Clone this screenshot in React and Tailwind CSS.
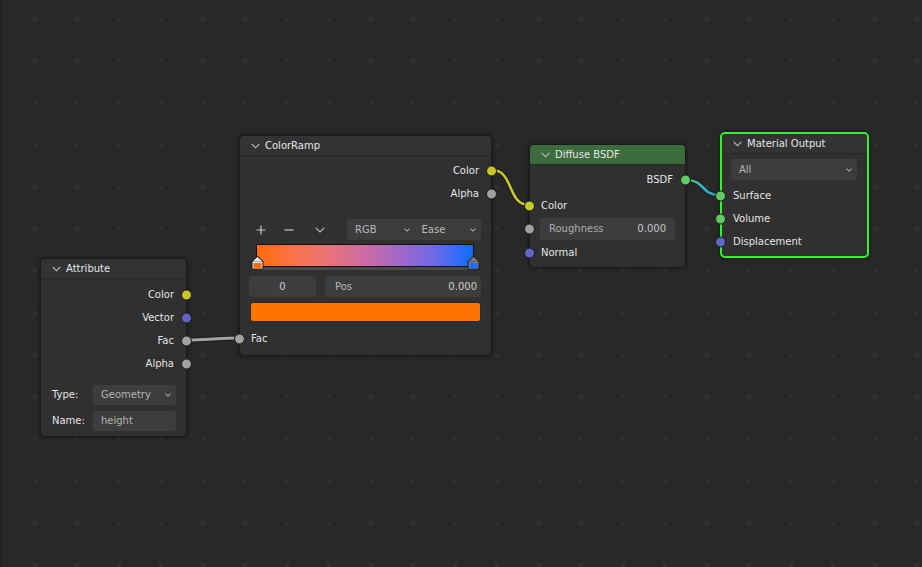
import React from "react";

const SOCK = {
  yellow: "bg-[#c7c729]",
  purple: "bg-[#6363c7]",
  gray: "bg-[#a1a1a1]",
  green: "bg-[#63c763]",
};

function Chevron({ className = "" }) {
  return (
    <svg width="9" height="6" viewBox="0 0 9 6" className={className}>
      <polyline points="0.7,0.8 4.5,4.8 8.3,0.8" fill="none" stroke="#c4c4c4" strokeWidth="1.1" />
    </svg>
  );
}

function SmallChevron() {
  return (
    <svg width="6" height="4" viewBox="0 0 6 4">
      <polyline points="0.6,0.6 3,3.2 5.4,0.6" fill="none" stroke="#c8c8c8" strokeWidth="1" />
    </svg>
  );
}

function Socket({ color, side, offset = "6" }) {
  const pos =
    side === "out"
      ? offset === "7"
        ? "right-[-7px]"
        : "right-[-6px]"
      : offset === "7"
      ? "left-[-7px]"
      : "left-[-6px]";
  return (
    <span
      className={`absolute top-1/2 -translate-y-1/2 ${pos} w-[11px] h-[11px] rounded-full border border-[#1b1b1b] ${SOCK[color]}`}
    />
  );
}

function OutRow({ label, color }) {
  return (
    <div className="relative h-[23px] flex items-center justify-end pr-[12px] text-[#e4e4e4]">
      {label}
      <Socket color={color} side="out" />
    </div>
  );
}

function InRow({ label, color, offset, cls = "" }) {
  return (
    <div className={`relative h-[23px] flex items-center pl-[11px] text-[#e4e4e4] ${cls}`}>
      {label}
      <Socket color={color} side="in" offset={offset} />
    </div>
  );
}

function Header({ title, green }) {
  return (
    <div
      className={`h-[20px] flex items-center pl-[11px] gap-[5px] border-b border-[#262626] rounded-t-[4px] ${
        green ? "bg-[#3c6b3c]" : "bg-[#333333]"
      } text-[#e6e6e6]`}
    >
      <Chevron />
      <span>{title}</span>
    </div>
  );
}

function Marker({ inner, selected }) {
  return (
    <svg width="13" height="15" viewBox="0 0 13 15">
      <path d="M6.5 0.5 L12.5 6.5 L12.5 14.5 L0.5 14.5 L0.5 6.5 Z" fill="#1a1a1a" />
      <path d="M6.5 1.8 L11.3 6.6 L1.7 6.6 Z" fill={selected ? "#e6e6e6" : "#7c7c7c"} />
      <rect x="1.5" y="6.6" width="10" height="7" fill={selected ? "#e6e6e6" : "#7c7c7c"} />
      <rect x="2.5" y="8" width="8" height="5.5" fill={inner} />
    </svg>
  );
}

export default function App() {
  return (
    <div className="relative w-[922px] h-[567px] overflow-hidden bg-[#282828] font-['DejaVu_Sans',sans-serif] text-[10px] leading-none">
      {/* dot grid */}
      <svg className="absolute inset-0" width="922" height="567">
        <defs>
          <pattern id="dots" width="42" height="42" patternUnits="userSpaceOnUse">
            <rect x="33" y="17" width="4" height="4" fill="#313131" />
          </pattern>
        </defs>
        <rect width="922" height="567" fill="url(#dots)" />
      </svg>
      <div className="absolute left-0 top-0 w-[3px] h-full bg-gradient-to-r from-[#1d1d1d] to-[#282828]" />

      {/* wires */}
      <svg className="absolute inset-0" width="922" height="567">
        <defs>
          <linearGradient id="teal" x1="686" y1="0" x2="720" y2="0" gradientUnits="userSpaceOnUse">
            <stop offset="0" stopColor="#4fb86e" />
            <stop offset="0.55" stopColor="#2db6d4" />
            <stop offset="1" stopColor="#2a9ca6" />
          </linearGradient>
        </defs>
        <path d="M187 340 C205 340 221 338 239 338" stroke="#1a1a1a" strokeWidth="5" fill="none" />
        <path d="M187 340 C205 340 221 338 239 338" stroke="#a3a3a3" strokeWidth="3" fill="none" />
        <path d="M492 170 C514 170 507 205 529 205" stroke="#1d1d1d" strokeWidth="4.5" fill="none" />
        <path d="M492 170 C514 170 507 205 529 205" stroke="#c9c92c" strokeWidth="2.6" fill="none" />
        <path d="M686 180 C706 180 700 195 720 195" stroke="#1d1d1d" strokeWidth="4.5" fill="none" />
        <path d="M686 180 C706 180 700 195 720 195" stroke="url(#teal)" strokeWidth="2.6" fill="none" />
      </svg>

      {/* Attribute node */}
      <div className="absolute left-[40px] top-[258px] w-[147px] bg-[#303030] border border-[#1b1b1b] rounded-[5px] shadow-[0_0_4px_rgba(0,0,0,0.5)]">
        <Header title="Attribute" />
        <div className="pt-[4px] pb-[5px]">
          <OutRow label="Color" color="yellow" />
          <OutRow label="Vector" color="purple" />
          <OutRow label="Fac" color="gray" />
          <OutRow label="Alpha" color="gray" />
          <div className="mt-[10px] flex items-center h-[20px] pl-[11px] pr-[10px]">
            <span className="w-[41px] text-[#e4e4e4]">Type:</span>
            <div className="flex-1 h-full rounded-[3px] bg-[#3d3d3d] flex items-center justify-between pl-[8px] pr-[5px] text-[#b4b4b4]">
              <span>Geometry</span>
              <SmallChevron />
            </div>
          </div>
          <div className="mt-[6px] flex items-center h-[20px] pl-[11px] pr-[10px]">
            <span className="w-[41px] text-[#e4e4e4]">Name:</span>
            <div className="flex-1 h-full rounded-[3px] bg-[#3d3d3d] flex items-center pl-[8px] text-[#b4b4b4]">
              height
            </div>
          </div>
        </div>
      </div>

      {/* ColorRamp node */}
      <div className="absolute left-[239px] top-[135px] w-[253px] bg-[#303030] border border-[#1b1b1b] rounded-[5px] shadow-[0_0_4px_rgba(0,0,0,0.5)]">
        <Header title="ColorRamp" />
        <div className="pt-[3px] pb-[5px]">
          <OutRow label="Color" color="yellow" />
          <OutRow label="Alpha" color="gray" />
          <div className="mt-[14px] h-[21px] flex items-center pl-[16px] pr-[10px]">
            <svg width="10" height="10" viewBox="0 0 10 10">
              <path d="M5 0.5 V9.5 M0.5 5 H9.5" stroke="#c8c8c8" strokeWidth="1.2" />
            </svg>
            <svg width="10" height="10" viewBox="0 0 10 10" className="ml-[18px]">
              <path d="M0.5 5 H9.5" stroke="#c8c8c8" strokeWidth="1.2" />
            </svg>
            <svg width="10" height="6" viewBox="0 0 10 6" className="ml-[21px]">
              <polyline points="0.7,0.8 5,5 9.3,0.8" fill="none" stroke="#c0c0c0" strokeWidth="1.1" />
            </svg>
            <div className="ml-auto w-[134px] h-full rounded-[3px] bg-[#3d3d3d] flex text-[#b8b8b8]">
              <div className="flex-1 flex items-center justify-between pl-[8px] pr-[5px]">
                <span>RGB</span>
                <SmallChevron />
              </div>
              <div className="flex-1 flex items-center justify-between pl-[7px] pr-[5px]">
                <span>Ease</span>
                <SmallChevron />
              </div>
            </div>
          </div>
          <div className="relative mt-[4px] h-[26px]">
            <div className="ml-[16px] w-[218px] h-[23px] border border-[#111111] bg-[linear-gradient(90deg,#ff6c0a_0%,#f8744c_18%,#e8727a_34%,#cc6ca4_50%,#a268c8_66%,#6a69e8_83%,#0d6bff_100%)]" />
            <div className="ml-[17px] w-[216px] h-[3px] bg-[#4a4a4a]" />
            <div className="absolute left-[11px] top-[11px]">
              <Marker inner="#ff6a00" selected />
            </div>
            <div className="absolute left-[227px] top-[11px]">
              <Marker inner="#1e6cff" />
            </div>
          </div>
          <div className="mt-[6px] h-[21px] flex pl-[9px] pr-[10px] gap-[9px]">
            <div className="w-[67px] rounded-[3px] bg-[#3d3d3d] flex items-center justify-center text-[#cdcdcd]">0</div>
            <div className="flex-1 rounded-[3px] bg-[#3d3d3d] flex items-center justify-between pl-[10px] pr-[4px]">
              <span className="text-[#b8b8b8]">Pos</span>
              <span className="text-[#cdcdcd]">0.000</span>
            </div>
          </div>
          <div className="mt-[5px] mx-[10px] h-[20px] rounded-[3px] bg-[#ff7300] border border-[#2a2a2a]" />
          <InRow label="Fac" color="gray" cls="mt-[5px]" />
        </div>
      </div>

      {/* Diffuse BSDF node */}
      <div className="absolute left-[529px] top-[144px] w-[157px] bg-[#303030] border border-[#1b1b1b] rounded-[5px] shadow-[0_0_4px_rgba(0,0,0,0.5)]">
        <Header title="Diffuse BSDF" green />
        <div className="pt-[3px] pb-[3px]">
          <OutRow label="BSDF" color="green" />
          <InRow label="Color" color="yellow" cls="mt-[3px]" />
          <div className="relative mt-[1px] h-[22px] mx-[10px] rounded-[3px] bg-[#3d3d3d] flex items-center justify-between pl-[9px] pr-[9px]">
            <span className="text-[#adadad]">Roughness</span>
            <span className="text-[#c8c8c8]">0.000</span>
            <span className="absolute top-1/2 -translate-y-1/2 left-[-16px] w-[11px] h-[11px] rounded-full border border-[#1b1b1b] bg-[#a1a1a1]" />
          </div>
          <InRow label="Normal" color="purple" cls="mt-[1px]" />
        </div>
      </div>

      {/* Material Output node */}
      <div className="absolute left-[720px] top-[132px] w-[149px] bg-[#303030] border-2 border-[#36ee36] rounded-[5px] shadow-[0_0_4px_rgba(0,0,0,0.5)]">
        <Header title="Material Output" />
        <div className="pt-[5px] pb-[3px]">
          <div className="ml-[9px] mr-[10px] h-[21px] rounded-[3px] bg-[#3d3d3d] flex items-center justify-between pl-[8px] pr-[5px] text-[#b8b8b8]">
            <span>All</span>
            <SmallChevron />
          </div>
          <div className="mt-[4px]">
            <InRow label="Surface" color="green" offset="7" />
            <InRow label="Volume" color="green" offset="7" />
            <InRow label="Displacement" color="purple" offset="7" />
          </div>
        </div>
      </div>
    </div>
  );
}
